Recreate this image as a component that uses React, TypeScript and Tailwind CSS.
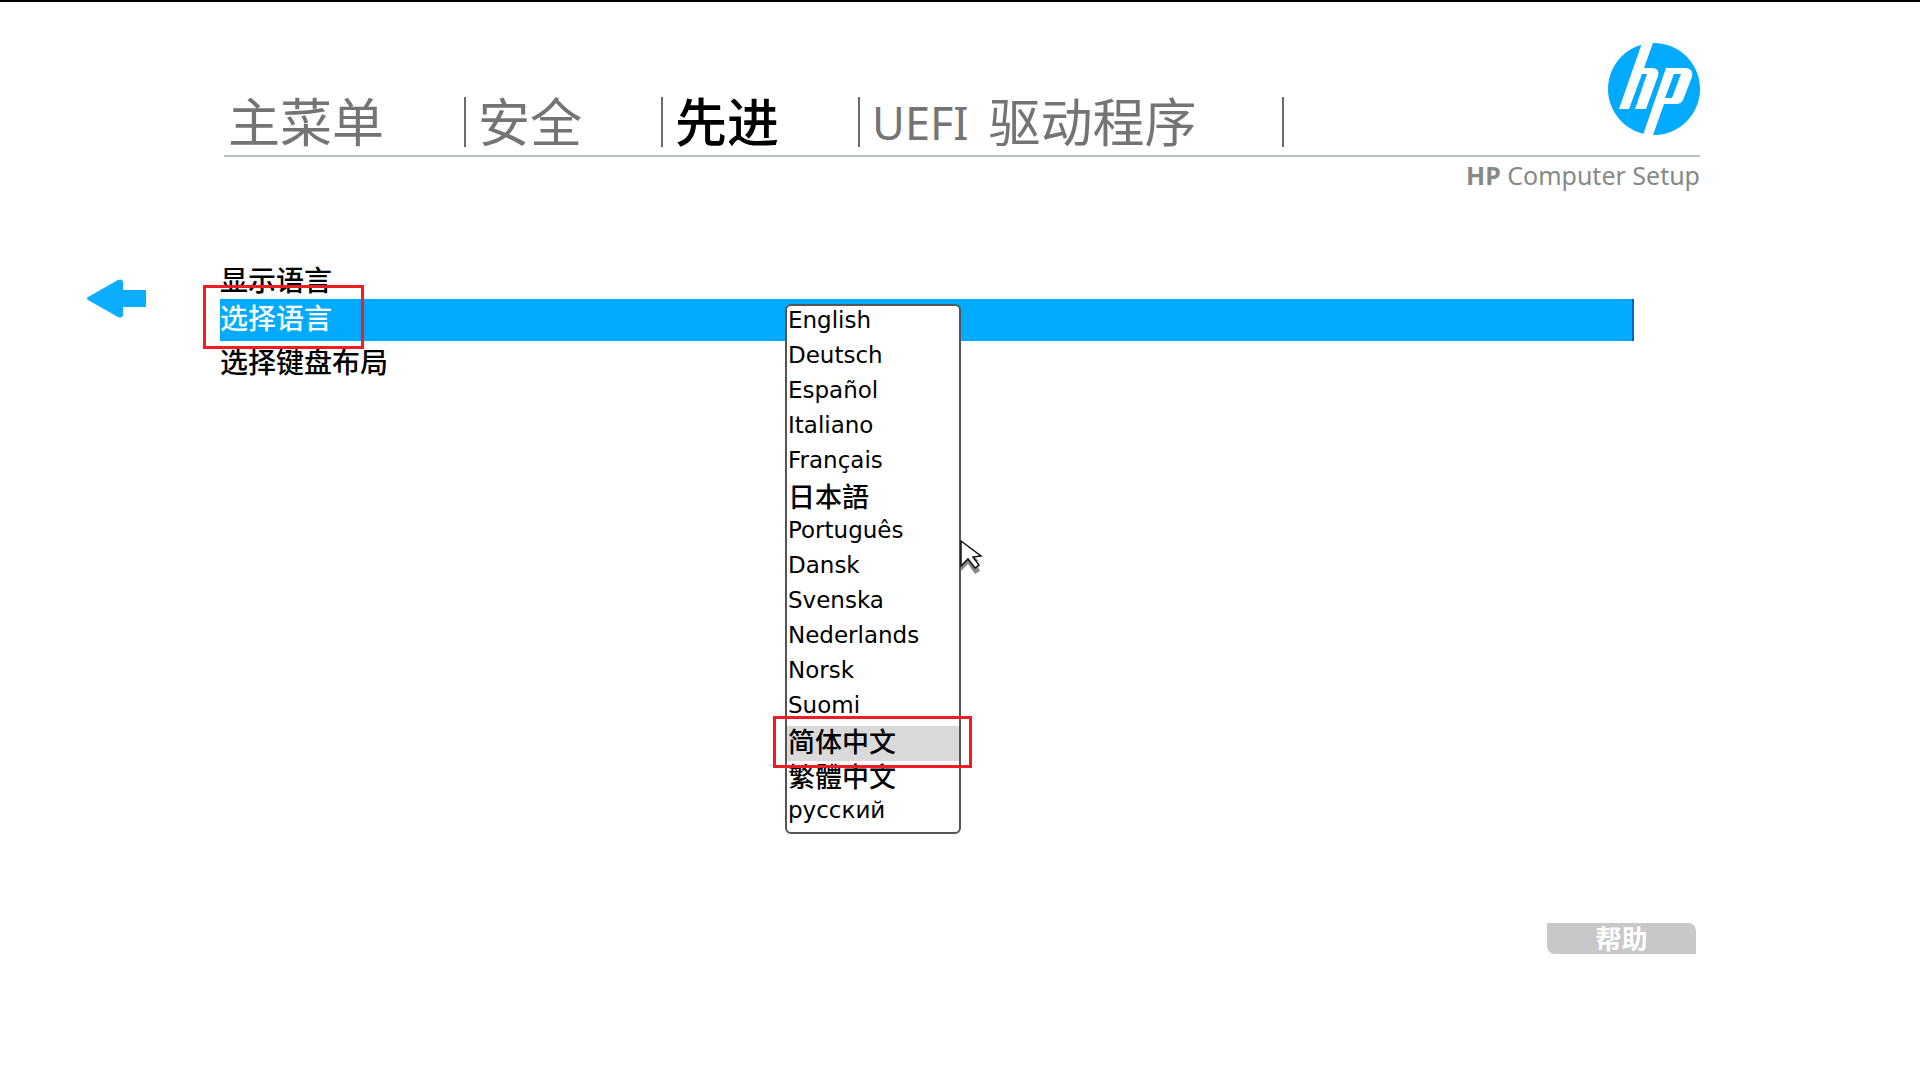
import React, { useState } from "react";

const tabs = [
  { id: "main", label: "主菜单", width: "w-[242px]" },
  { id: "security", label: "安全", width: "w-[197px]" },
  { id: "advanced", label: "先进", width: "w-[197px]" },
  { id: "uefi", prefix: "UEFI", label: "驱动程序", width: "w-[424px]" },
];

const languages = [
  { name: "English" },
  { name: "Deutsch" },
  { name: "Español" },
  { name: "Italiano" },
  { name: "Français" },
  { name: "日本語", cjk: true },
  { name: "Português" },
  { name: "Dansk" },
  { name: "Svenska" },
  { name: "Nederlands" },
  { name: "Norsk" },
  { name: "Suomi" },
  { name: "简体中文", cjk: true },
  { name: "繁體中文", cjk: true },
  { name: "русский" },
];

const HpLogo: React.FC = () => (
  <svg viewBox="0 0 92 92" className="size-[92px]" role="img" aria-label="HP">
    <circle cx="46" cy="46" r="46" fill="#00aaff" />
    <path
      d="M34 0 L11 66 H21 L34 31 H39 L27 66 H38 L50 33 Q52 25 44 25 H36 L45 0 Z"
      fill="#fff"
    />
    <path
      fillRule="evenodd"
      d="M58 25 H78 Q86 26 84 34 L75 57 Q73 61 68 61 H56 L45 92 H35 Z M66 31 L57 55 H64 L73 31 Z"
      fill="#fff"
    />
  </svg>
);

const Cursor: React.FC = () => (
  <svg
    viewBox="0 0 23 34"
    className="pointer-events-none absolute left-[740px] top-[275px] h-[34px] w-[23px]"
    aria-hidden="true"
  >
    <path d="M1 6 L19 21 L15 21 L20 31 L15 34 L8 24 L1 31 Z" fill="#888" />
    <path
      d="M1 1 L21 16 L13 17 L19 25 L15 28 L8 19 L1 26 Z"
      fill="#fff"
      stroke="#111"
      strokeWidth="1.5"
    />
  </svg>
);

const App: React.FC = () => {
  const [activeTab, setActiveTab] = useState("advanced");
  const [language, setLanguage] = useState("简体中文");

  return (
    <div className="min-h-screen border-t-2 border-black bg-white font-['Noto_Sans','Noto_Sans_CJK_SC',sans-serif] text-black">
      <header className="pl-[224px] pr-[220px] pt-[41px]">
        <div className="flex items-end justify-between border-b-2 border-[#b9c3bf] pb-2">
          <nav className="flex">
            {tabs.map((tab) => (
              <button
                key={tab.id}
                type="button"
                onClick={() => setActiveTab(tab.id)}
                className={`${tab.width} flex h-[50px] items-center gap-5 whitespace-nowrap border-r-2 border-[#6b6b6b] text-left text-[52px] leading-none ${
                  tab.id === "main" ? "pl-1" : "pl-3"
                } ${
                  activeTab === tab.id ? "font-medium text-black" : "text-[#747474]"
                }`}
              >
                {tab.prefix && <span className="text-[45px]">{tab.prefix}</span>}
                <span>{tab.label}</span>
              </button>
            ))}
          </nav>
          <div className="pb-3">
            <HpLogo />
          </div>
        </div>
        <p className="text-right text-[25px] leading-9 text-[#858a88]">
          <strong>HP</strong> Computer Setup
        </p>
      </header>

      <main className="relative ml-[220px] mr-[286px] mt-[72px] text-[28px]">
        <button type="button" aria-label="返回" className="absolute -left-[133px] top-[14px]">
          <svg viewBox="0 0 59 39" className="h-[39px] w-[59px]" aria-hidden="true">
            <path
              d="M1 18 L31 1 Q36 -1 36 4 V11 H59 V28 H36 V35 Q36 40 31 38 L1 21 Q-1 19.500 1 18 Z"
              fill="#0aadff"
            />
          </svg>
        </button>

        <h1 className="h-[34px] font-medium leading-[30px]">显示语言</h1>
        <label
          htmlFor="language"
          className="block h-[42px] border-r-2 border-[#0a5fd0] bg-[#00aaff] font-medium leading-[38px] text-white"
        >
          选择语言
        </label>
        <button type="button" className="block h-[42px] font-medium leading-[38px]">
          选择键盘布局
        </button>

        <select
          id="language"
          size={languages.length}
          value={language}
          onChange={(e) => setLanguage(e.target.value)}
          className="absolute left-[565px] top-[39px] h-[530px] w-[176px] appearance-none overflow-hidden rounded-md border-2 border-[#555] bg-white"
        >
          {languages.map(({ name, cjk }) => (
            <option
              key={name}
              value={name}
              className={`flex h-[35px] items-center p-0 pb-[7px] pl-px text-black checked:bg-linear-to-r checked:from-[#dadada] checked:to-[#dadada] ${
                cjk
                  ? "font-['Noto_Sans_CJK_SC',sans-serif] text-[27px] font-medium"
                  : "font-['DejaVu_Sans',sans-serif] text-[23px]"
              }`}
            >
              {name}
            </option>
          ))}
        </select>

        {/* Highlight frames */}
        <div className="pointer-events-none absolute -left-[17px] top-5 h-16 w-[161px] border-[3px] border-[#ee1c25]" />
        <div className="pointer-events-none absolute left-[553px] top-[451px] h-[52px] w-[199px] border-[3px] border-[#ee1c25]" />
        <Cursor />
      </main>

      <footer className="flex justify-end pr-[224px] pt-[540px]">
        <button
          type="button"
          className="h-[31px] w-[149px] rounded-bl-lg rounded-tr-lg bg-[#c8c8c9] text-[26px] font-bold leading-[26px] text-white"
        >
          帮助
        </button>
      </footer>
    </div>
  );
};

export default App;
